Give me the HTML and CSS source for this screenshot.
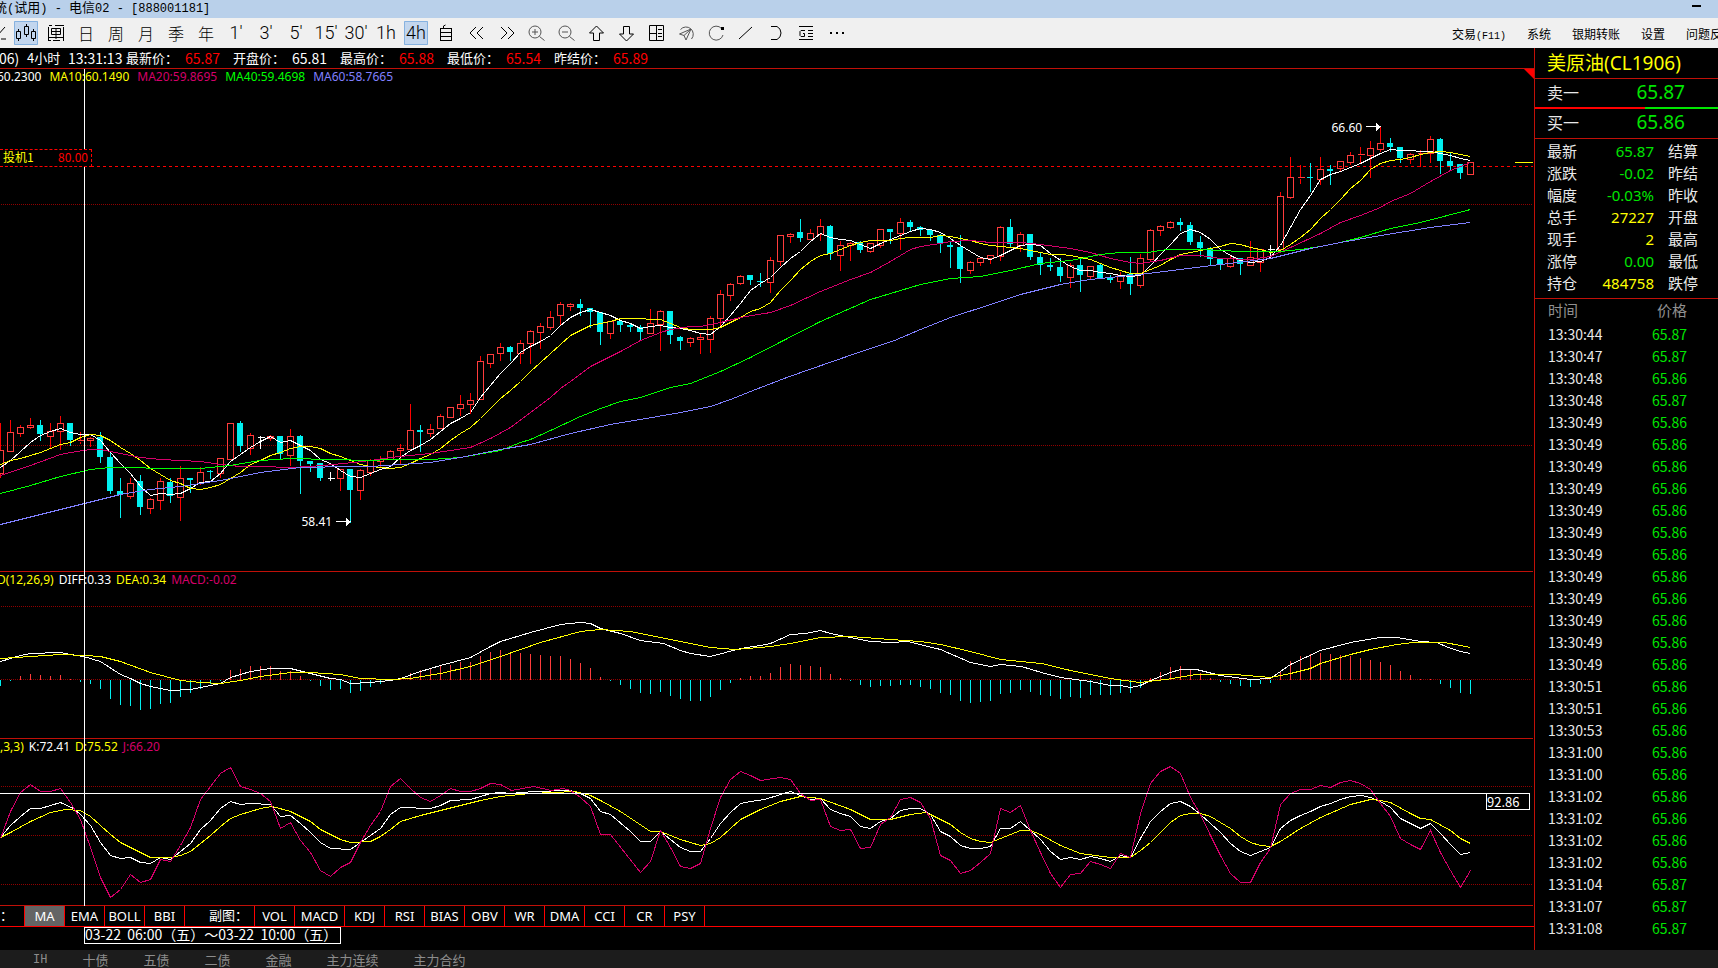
FILE: index.html
```html
<!DOCTYPE html>
<html lang="zh-CN">
<head>
<meta charset="utf-8">
<title>美原油(CL1906)</title>
<link rel="stylesheet" href="styles.css">
</head>
<body>
<div class="app">
  <header class="titlebar">
    <h1 class="window-title">统<span class="mono">(</span>试用<span class="mono">) - </span>电信<span class="mono">02 - [888001181]</span></h1>
    <button class="minimize" aria-label="最小化"></button>
  </header>

  <nav class="toolbar">
    <div class="tools">
      <button class="tool" aria-label="分时"><svg viewBox="0 0 24 24"><path d="M3 17l6-6 4 4 8-9M17 18h5"/></svg></button>
      <button class="tool active" aria-label="K线"><svg viewBox="0 0 24 24"><path d="M4.500 8v3M4.500 17v3M2.500 10.500h4v7h-4zM12.500 3v3M12.500 13v3M10.500 5.500h4v8h-4zM19.500 8v3M19.500 17v3M17.500 10.500h4v7h-4z"/></svg></button>
      <button class="tool" aria-label="盘口"><svg viewBox="0 0 24 24"><path d="M4.500 6v14M19.500 6v14M5 4.500h3M11 4.500h9M7.500 7.500h9v6h-9zM7.500 10.500h9M12 7v11M5 16.500h14M5 19.500h2M9 19.500h7"/></svg></button>
      <button class="tool">日</button>
      <button class="tool">周</button>
      <button class="tool">月</button>
      <button class="tool">季</button>
      <button class="tool">年</button>
      <button class="tool num">1′</button>
      <button class="tool num">3′</button>
      <button class="tool num">5′</button>
      <button class="tool num">15′</button>
      <button class="tool num">30′</button>
      <button class="tool num">1h</button>
      <button class="tool num active">4h</button>
      <button class="tool" aria-label="自定义"><svg viewBox="0 0 24 24"><path d="M6.500 7v13M17.500 7v13M6 7.500h12M6 11.500h12M6 15.500h12M6 19.500h12M9.500 7V5l2-1"/></svg></button>
      <button class="tool" aria-label="后退"><svg viewBox="0 0 24 24"><path d="M12 6l-6 6 6 6M19 6l-6 6 6 6"/></svg></button>
      <button class="tool" aria-label="前进"><svg viewBox="0 0 24 24"><path d="M7 6l6 6-6 6M14 6l6 6-6 6"/></svg></button>
      <button class="tool soft" aria-label="放大"><svg viewBox="0 0 24 24"><circle cx="11" cy="11" r="6"/><path d="M15.500 15.500l5 4M8 11h6M11 8v6"/></svg></button>
      <button class="tool soft" aria-label="缩小"><svg viewBox="0 0 24 24"><circle cx="11" cy="11" r="6"/><path d="M15.500 15.500l5 4M8 11h6"/></svg></button>
      <button class="tool" aria-label="上移"><svg viewBox="0 0 24 24"><path d="M12.500 5l-7 7h4v7.500h6V12h4z"/></svg></button>
      <button class="tool" aria-label="下移"><svg viewBox="0 0 24 24"><path d="M12.500 20l-7-7h4V5.500h6V13h4z"/></svg></button>
      <button class="tool" aria-label="布局"><svg viewBox="0 0 24 24"><path d="M5.500 4.500h14v15h-14zM12.500 5v14M6 12.500h6M14 8.500h4M14 12.500h4M14 15.500h4"/></svg></button>
      <button class="tool soft" aria-label="定位"><svg viewBox="0 0 24 24"><path d="M6.500 8.500a7 7 0 1 1 11 9.500M17 8l-11.500 5 4.500 1.500 2 4.500zM17 8l-7 6.500"/></svg></button>
      <button class="tool soft" aria-label="刷新"><svg viewBox="0 0 24 24"><path d="M17.500 7.500a7 7 0 1 0 1.500 6.500"/><path class="solid" d="M17 6h3v3h-3z"/></svg></button>
      <button class="tool" aria-label="画线"><svg viewBox="0 0 24 24"><path d="M5 18L18 6"/></svg></button>
      <button class="tool" aria-label="画弧"><svg viewBox="0 0 24 24"><path d="M7 5.500h6q4 2 4 6.500t-4 6.500H7"/></svg></button>
      <button class="tool" aria-label="公式"><svg viewBox="0 0 24 24"><path d="M5 5.500h14M5 18.500h14M14 9.500h5M14 12.500h5M14 15.500h5M11 9.500H7l-1 1v4l1 1h3.500v-3H9"/></svg></button>
      <button class="tool" aria-label="更多"><svg viewBox="0 0 24 24"><path class="solid" d="M6 11h2v2H6zM12 11h2v2h-2zM18 11h2v2h-2z"/></svg></button>
    </div>
    <div class="menu">
      <button>交易<span class="mono">(F11)</span></button>
      <button>系统</button>
      <button>银期转账</button>
      <button>设置</button>
      <button>问题反馈</button>
    </div>
  </nav>

  <div class="workspace">
    <main class="chart-area">
      <div class="quote-line">
        <span class="code">06)</span>
        <span class="period">4小时</span>
        <span class="clock">13:31:13</span>
        <dl class="quotes">
          <div><dt>最新价：</dt><dd class="up">65.87</dd></div>
          <div><dt>开盘价：</dt><dd>65.81</dd></div>
          <div><dt>最高价：</dt><dd class="up">65.88</dd></div>
          <div><dt>最低价：</dt><dd class="up">65.54</dd></div>
          <div><dt>昨结价：</dt><dd class="up">65.89</dd></div>
        </dl>
      </div>

      <div class="charts">
        <section class="panel price">
          <svg id="price" class="plot"></svg>
          <div class="legend wide"><span>60.2300</span><span class="yellow">MA10:60.1490</span><span class="magenta">MA20:59.8695</span><span class="lime">MA40:59.4698</span><span class="violet">MA60:58.7665</span></div>
          <div class="corner"></div>
        </section>
        <section class="panel">
          <svg id="macd" class="plot"></svg>
          <div class="legend"><span class="yellow">D(12,26,9)</span><span>DIFF:0.33</span><span class="yellow">DEA:0.34</span><span class="magenta">MACD:-0.02</span></div>
        </section>
        <section class="panel">
          <svg id="kdj" class="plot"></svg>
          <div class="legend flush"><span class="yellow">,3,3)</span><span>K:72.41</span><span class="yellow">D:75.52</span><span class="magenta">J:66.20</span></div>
        </section>
        <div class="cross-v"></div>
        <div class="cross-h"></div>
        <output class="cross-value">92.86</output>
        <div class="order"><span>投机1</span><span class="up">80.00</span></div>
      </div>

      <div class="tabs">
        <span class="tab-label first">：</span>
        <button class="selected">MA</button>
        <button>EMA</button>
        <button>BOLL</button>
        <button>BBI</button>
        <span class="tab-label">副图：</span>
        <button>VOL</button>
        <button class="wide">MACD</button>
        <button>KDJ</button>
        <button>RSI</button>
        <button>BIAS</button>
        <button>OBV</button>
        <button>WR</button>
        <button>DMA</button>
        <button>CCI</button>
        <button>CR</button>
        <button>PSY</button>
      </div>
      <div class="time-axis"><time>03-22  06:00（五）～03-22  10:00（五）</time></div>
    </main>

    <aside class="side">
      <h2 class="contract">美原油(CL1906)</h2>
      <div class="depth"><span>卖一</span><strong>65.87</strong></div>
      <div class="ratio"></div>
      <div class="depth"><span>买一</span><strong>65.86</strong></div>
      <table class="stats">
        <tr><th>最新</th><td>65.87</td><th>结算</th></tr>
        <tr><th>涨跌</th><td>-0.02</td><th>昨结</th></tr>
        <tr><th>幅度</th><td>-0.03%</td><th>昨收</th></tr>
        <tr><th>总手</th><td class="yellow">27227</td><th>开盘</th></tr>
        <tr><th>现手</th><td class="yellow">2</td><th>最高</th></tr>
        <tr><th>涨停</th><td>0.00</td><th>最低</th></tr>
        <tr><th>持仓</th><td class="yellow">484758</td><th>跌停</th></tr>
      </table>
      <table class="ticks">
        <thead><tr><th>时间</th><th>价格</th></tr></thead>
        <tbody>
          <tr><td>13:30:44</td><td>65.87</td></tr>
          <tr><td>13:30:47</td><td>65.87</td></tr>
          <tr><td>13:30:48</td><td>65.86</td></tr>
          <tr><td>13:30:48</td><td>65.87</td></tr>
          <tr><td>13:30:49</td><td>65.86</td></tr>
          <tr><td>13:30:49</td><td>65.86</td></tr>
          <tr><td>13:30:49</td><td>65.86</td></tr>
          <tr><td>13:30:49</td><td>65.86</td></tr>
          <tr><td>13:30:49</td><td>65.86</td></tr>
          <tr><td>13:30:49</td><td>65.86</td></tr>
          <tr><td>13:30:49</td><td>65.86</td></tr>
          <tr><td>13:30:49</td><td>65.86</td></tr>
          <tr><td>13:30:49</td><td>65.86</td></tr>
          <tr><td>13:30:49</td><td>65.86</td></tr>
          <tr><td>13:30:49</td><td>65.86</td></tr>
          <tr><td>13:30:49</td><td>65.86</td></tr>
          <tr><td>13:30:51</td><td>65.86</td></tr>
          <tr><td>13:30:51</td><td>65.86</td></tr>
          <tr><td>13:30:53</td><td>65.86</td></tr>
          <tr><td>13:31:00</td><td>65.86</td></tr>
          <tr><td>13:31:00</td><td>65.86</td></tr>
          <tr><td>13:31:02</td><td>65.86</td></tr>
          <tr><td>13:31:02</td><td>65.86</td></tr>
          <tr><td>13:31:02</td><td>65.86</td></tr>
          <tr><td>13:31:02</td><td>65.86</td></tr>
          <tr><td>13:31:04</td><td>65.87</td></tr>
          <tr><td>13:31:07</td><td>65.87</td></tr>
          <tr><td>13:31:08</td><td>65.87</td></tr>
        </tbody>
      </table>
    </aside>
  </div>

  <footer class="markets">
    <button class="mono">IH</button>
    <button>十债</button>
    <button>五债</button>
    <button>二债</button>
    <button>金融</button>
    <button>主力连续</button>
    <button>主力合约</button>
  </footer>
</div>
<script src="chart.js"></script>
</body>
</html>
```

FILE: styles.css
```css
:root {
  --red: #ff0000;
  --line: #c01008;
  --yellow: #ffff00;
  --magenta: #d4006a;
  --lime: #00ff00;
  --green: #00e600;
  --violet: #8080ff;
  --cyan: #00f0f0;
  --cjk: "Noto Sans CJK SC", sans-serif;
  --latin: "Noto Sans", "Noto Sans CJK SC", sans-serif;
}

* { box-sizing: border-box; }

body {
  margin: 0;
  background: #000;
  color: #fff;
  font-family: var(--cjk);
  font-size: 13px;
  overflow: hidden;
}

button {
  padding: 0;
  border: 0;
  background: none;
  color: inherit;
  font: inherit;
}

.app {
  display: flex;
  flex-direction: column;
  min-height: 100vh;
}

.mono { font-family: "Liberation Mono", monospace; font-size: 12px; }
.up { color: var(--red); }
.yellow { color: var(--yellow); }
.magenta { color: var(--magenta); }
.lime { color: var(--lime); }
.violet { color: var(--violet); }

/* Window title */
.titlebar {
  display: flex;
  justify-content: space-between;
  height: 18px;
  background: #b9d0ea;
  color: #000;
}
.window-title {
  margin: 0 0 0 -6px;
  font-size: 13px;
  font-weight: 400;
  line-height: 14px;
  white-space: pre;
}
.minimize {
  width: 9px;
  height: 2px;
  margin: 5px 17px 0 0;
  background: #000;
}

/* Toolbar */
.toolbar {
  display: flex;
  justify-content: space-between;
  align-items: center;
  height: 30px;
  background: #f0f0f0;
  color: #000;
}
.tools {
  display: flex;
  gap: 6px;
  margin-left: -16px;
}
.tool {
  display: flex;
  align-items: center;
  justify-content: center;
  width: 24px;
  height: 24px;
  font-size: 16px;
  font-weight: 300;
  line-height: 22px;
  white-space: nowrap;
}
.tool.num { font-family: Roboto, sans-serif; font-size: 18px; }
.tool.active {
  background: #c2d6ee;
  box-shadow: inset 0 0 0 1px #86b2e0;
  border-radius: 1px;
}
.tool svg {
  flex: none;
  width: 24px;
  height: 24px;
  fill: none;
  stroke: #000;
}
.tool.soft svg { stroke: #555; }
.tool .solid { fill: #000; stroke: none; }
.menu {
  display: flex;
  gap: 21px;
  margin-right: -16px;
  font-size: 12px;
}
.menu .mono { font-size: 10px; }

/* Workspace */
.workspace { display: flex; flex: 1; }
.chart-area {
  display: flex;
  flex: 1;
  flex-direction: column;
  min-width: 0;
}
.quote-line {
  display: flex;
  align-items: center;
  height: 21px;
  border-bottom: 1px solid var(--line);
  font-size: 14px;
  line-height: 20px;
  overflow: hidden;
}
.code { width: 28px; margin-left: -1px; }
.period { width: 41px; font-size: 13px; }
.clock { width: 58px; }
.quotes { display: flex; margin: 0; }
.quotes div { display: flex; width: 107px; }
.quotes dt { width: 59px; font-size: 13px; }
.quotes dd { margin: 0; }

.charts {
  position: relative;
  flex: 1;
  overflow: hidden;
}
.panel {
  position: relative;
  height: 167px;
  margin-right: 1px;
  border-bottom: 1px solid var(--line);
}
.panel.price { height: 503px; }
.plot {
  display: block;
  width: 100%;
  height: 100%;
  overflow: hidden;
  shape-rendering: crispEdges;
}
.plot text { fill: #fff; font-family: var(--latin); font-size: 12px; }
.plot line, .plot polyline, .plot path { fill: none; stroke-width: 1; }
.grid { stroke: #900000; stroke-dasharray: 1 1; }
.dash { stroke: var(--red); stroke-dasharray: 3 3; }
.wick-r { stroke: #ff0000; }
.body-r { stroke: #ff3c3c; }
.wick-c { stroke: var(--cyan); }
.body-c { fill: var(--cyan); }
.doji { stroke: #fff; }
.s-white { stroke: #fff; }
.s-yellow { stroke: var(--yellow); }
.s-magenta { stroke: var(--magenta); }
.s-lime { stroke: var(--lime); }
.s-violet { stroke: var(--violet); }
.arrow { fill: #fff; }

.legend {
  position: absolute;
  top: 0;
  left: -3px;
  display: flex;
  gap: 5px;
  font-family: var(--latin);
  font-size: 12px;
  line-height: 16px;
  white-space: nowrap;
}
.legend.wide { gap: 8px; }
.legend.flush { left: 0; }
.corner {
  position: absolute;
  top: 0;
  right: -1px;
  border-top: 10px solid var(--red);
  border-left: 10px solid transparent;
}
.cross-v {
  position: absolute;
  top: 0;
  bottom: 0;
  left: 84px;
  width: 1px;
  background: #fff;
}
.cross-h {
  position: absolute;
  top: 724px;
  right: 4px;
  left: 0;
  height: 1px;
  background: #fff;
}
.cross-value {
  position: absolute;
  top: 724px;
  right: 4px;
  width: 44px;
  height: 17px;
  border: 1px solid #fff;
  background: #000;
  font-size: 13px;
  line-height: 15px;
}
.order {
  position: absolute;
  top: 80px;
  left: 0;
  display: flex;
  justify-content: space-between;
  width: 92px;
  height: 18px;
  padding: 0 3px;
  border: 1px dashed var(--red);
  border-left: 0;
  background: #000;
  color: var(--yellow);
  font-size: 12px;
  line-height: 14px;
}

/* Indicator tabs */
.tabs {
  display: flex;
  height: 21px;
  border-bottom: 1px solid var(--red);
  font-family: var(--latin);
  font-size: 13px;
  line-height: 18px;
  overflow: hidden;
}
.tabs button, .tab-label {
  flex: none;
  width: 40px;
  border-right: 1px solid var(--red);
  text-align: center;
}
.tabs .wide { width: 50px; }
.tabs .selected { background: #646464; }
.tab-label { width: 70px; padding-left: 18px; }
.tab-label.first { width: 25px; padding: 0; text-align: left; }
.time-axis { height: 23px; padding-left: 84px; }
.time-axis time {
  display: inline-block;
  width: 257px;
  height: 17px;
  border: 1px solid #fff;
  font-size: 14px;
  line-height: 13px;
  white-space: pre;
  vertical-align: top;
}

/* Quote sidebar */
.side {
  width: 184px;
  border-left: 1px solid var(--line);
  color: #e8e8e8;
  overflow: hidden;
}
.contract {
  height: 31px;
  margin: 0;
  padding-left: 12px;
  border-bottom: 1px solid var(--line);
  color: var(--yellow);
  font-family: var(--latin);
  font-size: 19px;
  font-weight: 400;
  line-height: 30px;
}
.depth {
  display: flex;
  justify-content: space-between;
  height: 28px;
  padding: 0 33px 0 12px;
  font-size: 16px;
  line-height: 26px;
}
.depth strong {
  color: var(--green);
  font-family: var(--latin);
  font-size: 19px;
  font-weight: 400;
}
.ratio {
  height: 2px;
  background: linear-gradient(90deg, var(--red) 60%, var(--green) 60%);
}
.side table { width: 100%; border-collapse: collapse; table-layout: fixed; }
.side th { padding: 0; font-weight: 400; text-align: left; }
.side td { padding: 0; }
.stats {
  margin-top: 1px;
  border-top: 1px solid var(--line);
  font-size: 15px;
  line-height: 22px;
}
.side .stats { display: block; padding: 1px 0 4px 12px; border-bottom: 1px solid var(--line); }
.stats tr { display: flex; height: 22px; }
.stats th { width: 50px; }
.stats th:first-child { width: 35px; }
.stats td {
  width: 72px;
  margin-right: 14px;
  color: var(--green);
  font-family: var(--latin);
  text-align: right;
}
.stats td.yellow { color: var(--yellow); }
.ticks { font-size: 14px; line-height: 22px; }
.ticks th { height: 24px; color: #909090; font-size: 15px; vertical-align: top; }
.ticks tr > :first-child { padding-left: 13px; }
.ticks tr > :last-child { padding-right: 31px; text-align: right; }
.ticks td { height: 22px; }
.ticks td:last-child { color: var(--green); }

/* Market tabs */
.markets {
  display: flex;
  gap: 35px;
  height: 18px;
  padding-left: 33px;
  background: #1c1c1c;
  color: #8c8c8c;
  font-size: 13px;
  line-height: 20px;
  overflow: hidden;
}
```

FILE: chart.js
```javascript
// Bars are 10px apart. Each candle: kind, body top, body bottom, high, low.
const candles = `
r 450 473 422 477|r 432 451 419 451|r 427 433 424 436|r 425 427 417 428|c 425 434 419 440|r 431 436 422 448|r 423 431 415 449|c 423 440 422 445|r 440 441 431 443|r 438 440 436 446|
c 437 457 431 462|c 457 491 452 493|c 491 495 477 517|r 483 496 477 498|c 481 507 474 514|r 499 508 497 513|r 481 500 477 509|c 482 496 477 502|r 478 497 465 520|c 478 480 477 492|
r 472 483 466 484|c 471 472 469 478|r 458 473 457 477|r 423 459 423 459|c 423 446 420 451|r 435 448 432 454|w 437 437 435 448|r 436 438 434 440|c 436 454 436 458|r 436 455 428 465|
c 436 461 434 493|c 461 464 460 471|c 463 478 462 480|w 478 478 471 480|r 469 478 468 490|c 469 490 469 522|r 470 490 468 499|r 460 472 458 475|r 459 461 455 466|r 451 459 449 459|
r 448 450 443 464|r 430 449 403 449|c 430 432 424 451|r 429 433 423 436|r 416 428 413 428|r 407 417 406 417|r 404 408 394 415|r 400 404 392 413|r 361 399 355 399|r 354 363 353 367|
r 347 353 342 360|c 347 352 345 360|r 343 353 339 363|r 331 343 329 363|r 326 332 322 348|r 317 327 310 329|r 304 315 301 324|r 304 306 302 310|c 304 308 298 315|c 308 312 307 327|
c 312 332 311 344|r 321 333 320 338|c 321 325 321 331|c 325 327 323 331|c 327 332 324 340|r 323 333 308 333|r 311 324 309 350|c 311 335 311 343|c 337 341 335 349|r 338 342 336 346|
r 337 339 333 353|r 318 339 315 352|r 294 318 289 325|r 284 295 282 300|r 276 283 274 284|c 275 280 274 284|c 281 282 272 286|r 260 282 256 292|r 235 261 234 265|r 234 236 232 242|
c 232 238 218 241|r 233 239 228 239|r 226 234 218 240|c 226 254 224 259|r 245 255 240 270|r 243 245 241 260|c 242 250 240 252|r 243 251 243 252|r 229 245 228 247|c 229 232 228 243|
r 222 233 217 249|c 222 227 219 231|c 227 230 225 235|c 230 235 229 240|c 235 244 233 252|c 245 247 241 267|c 247 269 234 282|r 262 270 260 273|r 258 262 257 265|r 255 258 255 263|
r 227 256 225 260|c 227 244 218 247|r 234 245 231 251|c 234 257 233 259|c 257 265 252 274|c 265 267 257 270|c 267 276 257 281|r 265 277 262 287|c 265 275 258 291|r 266 276 265 279|
c 265 278 263 278|c 278 280 274 282|r 275 281 271 288|c 274 284 256 294|r 258 285 253 287|r 230 259 228 261|r 226 230 224 235|r 222 227 220 228|c 222 225 217 230|c 225 242 221 244|
c 242 248 235 256|c 248 259 246 264|c 258 264 257 269|r 258 266 255 267|c 258 264 258 274|r 257 265 240 265|r 249 262 249 271|w 249 249 244 255|r 196 249 191 249|r 177 197 156 198|
r 177 178 164 183|c 177 178 162 191|r 169 179 156 184|c 169 171 164 184|r 161 168 160 170|r 155 162 151 164|r 154 155 146 162|r 148 155 140 177|r 143 149 126 151|c 143 147 137 151|
c 147 158 147 162|r 154 159 152 163|r 153 154 149 166|r 139 153 135 162|c 139 161 137 173|c 161 166 152 170|c 164 173 164 178|r 162 174 162 174`
  .replace(/\n/g, '').split('|').map(s => s.split(' '));

// One value per bar.
const ma5 = [467,460,451,442,435,431,428,432,434,434,440,452,463,473,486,495,493,494,493,488,482,481,473,461,454,447,441,436,442,440,445,450,459,463,470,476,477,473,469,466,457,450,445,439,431,423,418,412,397,385,373,363,352,346,341,335,325,317,312,309,312,315,320,323,328,326,325,327,328,330,333,334,326,315,303,290,283,277,267,258,251,241,233,237,239,240,244,248,243,239,235,231,228,229,232,238,245,251,257,259,255,250,245,244,245,253,260,266,270,270,272,273,275,276,275,265,254,244,233,229,232,239,249,255,260,262,261,257,245,227,209,195,179,174,171,167,163,158,153,149,150,150,151,151,153,155,158,160];
const ma10 = [464,460,458,455,452,448,444,442,437,434,435,440,447,453,460,468,474,480,483,488,489,487,484,478,472,464,460,455,452,448,446,446,448,453,456,460,464,466,467,468,467,463,458,454,448,440,433,427,418,408,398,390,381,371,362,353,344,335,330,325,323,321,318,318,318,319,319,323,327,329,329,329,327,322,317,311,308,302,290,280,269,261,255,253,249,245,242,240,240,240,238,237,237,237,235,236,238,240,243,245,246,247,248,250,252,254,254,255,257,259,263,267,270,273,273,269,265,259,254,252,250,248,246,243,244,247,249,252,250,244,237,229,218,209,199,188,180,169,163,160,159,157,154,152,151,152,154,156];
const ma20 = '0,475 30,465 60,454 70,452 90,449 100,449 120,453 140,457 160,459 180,460 200,461 220,464 240,466 260,466 290,467 310,466 333,464 353,462 370,460 390,457 410,455 430,453 450,450 470,447 490,438 510,427 530,412 550,397 560,388 570,381 590,366 600,361 620,351 640,340 660,332 670,329 690,326 700,326 720,322 740,317 770,312 790,305 820,291 830,287 850,279 870,272 890,261 910,249 920,246 940,243 950,241 970,240 990,242 1020,242 1040,244 1070,248 1090,252 1110,258 1130,262 1140,263 1160,260 1180,255 1200,255 1220,258 1250,259 1270,256 1290,247 1320,233 1340,222 1360,215 1380,207 1390,201 1410,193 1430,181 1450,170 1470,162';
const ma40 = '0,493 30,485 60,476 90,469 110,467 140,467 150,468 200,468 230,465 260,460 290,458 330,459 370,460 390,459 430,459 460,457 500,450 520,442 530,439 550,430 580,416 600,408 620,401 640,397 670,387 690,383 720,371 750,357 783,340 820,321 870,299 920,284 950,278 980,276 1010,270 1040,263 1070,260 1100,254 1120,252 1147,252 1167,249 1200,249 1240,251 1280,251 1300,249 1320,246 1340,242 1360,237 1390,228 1420,222 1470,209';
const ma60 = '0,524 40,514 80,504 120,494 150,489 180,486 220,480 260,472 300,467 350,466 370,466 400,464 430,462 460,457 500,449 530,444 570,433 610,424 640,419 680,412 710,406 730,399 750,391 789,376 855,353 894,340 920,329 950,317 990,304 1020,294 1060,284 1090,279 1120,276 1140,274 1180,269 1220,264 1270,258 1310,248 1340,242 1380,235 1430,227 1470,222';
const hist = [-6,-1,4,6,5,4,5,1,-2,-4,-9,-19,-25,-26,-30,-29,-24,-23,-17,-13,-9,-4,-1,10,11,14,14,14,9,9,4,-1,-6,-10,-9,-13,-11,-7,-4,-1,2,7,10,11,14,15,18,18,24,28,30,28,27,26,25,24,24,21,17,12,3,-1,-5,-9,-13,-14,-12,-16,-19,-21,-21,-17,-10,-3,2,4,4,7,13,16,15,14,13,6,2,-1,-5,-7,-6,-6,-5,-5,-7,-9,-13,-15,-21,-23,-22,-21,-14,-13,-10,-12,-15,-16,-19,-17,-18,-15,-15,-15,-13,-13,-8,2,8,13,14,11,7,2,-2,-4,-6,-7,-4,-3,8,19,24,26,27,26,25,24,22,20,18,15,9,5,1,1,-4,-8,-13,-14];
const diff = '0,661 10,658 20,655 30,653 60,652 70,654 83,656 100,661 120,674 130,678 140,683 150,686 170,690 190,689 220,683 230,677 240,674 250,671 270,668 290,668 310,673 330,678 340,679 350,683 370,682 390,680 400,678 420,671 440,665 470,657 490,646 500,641 530,632 560,624 580,622 590,623 600,628 620,633 640,640 663,643 680,650 690,653 710,656 740,648 760,645 770,643 790,634 805,633 820,630 830,633 850,637 870,641 890,642 907,641 940,649 970,662 990,666 1000,664 1021,666 1041,672 1060,677 1090,681 1110,685 1120,685 1130,687 1140,685 1150,680 1170,672 1180,669 1196,669 1220,675 1250,679 1270,678 1290,664 1320,650 1350,642 1380,637 1396,637 1420,641 1436,642 1448,647 1460,651 1470,653';
const dea = '0,658 30,656 60,654 84,655 100,656 120,661 150,672 180,680 200,682 220,683 240,680 260,676 290,672 310,672 340,674 360,678 390,679 410,678 440,673 470,666 500,656 540,642 580,631 600,629 630,631 660,637 690,643 710,647 735,649 770,646 790,643 820,637 850,636 890,639 920,641 940,644 970,651 1000,659 1041,663 1070,670 1110,678 1139,682 1165,679 1196,674 1234,674 1270,677 1290,673 1310,668 1320,663 1350,654 1370,649 1396,644 1413,642 1444,642 1460,645 1470,647';
const kLine = '0,837 10,825 20,816 30,808 40,808 60,802 73,808 80,814 90,825 100,842 110,855 120,858 130,857 140,862 150,863 160,857 170,859 180,851 190,843 200,829 210,820 220,808 230,801 240,804 250,803 270,804 280,816 290,815 300,823 310,832 320,842 330,848 350,849 360,842 370,835 380,828 390,814 400,807 430,808 440,805 450,800 470,799 490,793 500,792 510,793 533,791 570,790 580,793 590,798 600,811 610,814 630,831 640,841 650,841 660,831 680,847 690,851 700,851 710,838 720,823 730,812 740,803 750,801 764,799 780,794 790,791 800,795 810,799 820,798 830,809 840,813 850,816 860,826 870,828 880,821 890,818 900,810 910,808 920,808 930,814 940,831 950,836 960,845 970,848 980,848 990,846 1000,828 1010,828 1020,821 1030,830 1040,839 1050,851 1060,859 1070,857 1080,859 1090,856 1100,858 1110,861 1120,855 1130,857 1140,838 1150,821 1160,811 1170,803 1180,801 1190,806 1200,814 1210,823 1220,832 1230,843 1240,851 1250,855 1260,851 1270,847 1280,828 1290,820 1300,815 1310,811 1320,806 1330,803 1340,799 1350,796 1361,795 1370,797 1380,801 1390,807 1400,818 1410,823 1420,828 1430,823 1440,833 1450,844 1460,854 1470,852';
const dLine = '0,837 10,832 30,821 50,812 65,809 80,810 90,816 100,825 110,834 120,842 130,847 150,857 170,857 180,855 190,851 200,843 210,835 220,826 230,818 240,814 260,808 272,806 290,811 310,821 320,829 340,839 350,842 370,841 380,836 390,829 400,821 420,815 440,810 460,805 480,800 500,796 530,793 575,791 590,795 600,800 620,811 650,831 660,831 680,839 690,842 700,845 710,843 720,837 740,819 760,809 780,801 800,796 820,798 850,809 870,819 890,819 910,814 925,812 930,814 950,824 960,832 970,838 980,841 990,842 1000,838 1010,834 1020,830 1030,830 1040,834 1060,845 1080,853 1110,857 1130,857 1140,850 1150,842 1160,832 1170,822 1180,815 1190,813 1200,813 1210,816 1230,828 1240,836 1250,842 1260,845 1270,846 1280,841 1300,828 1320,817 1350,804 1370,799 1380,800 1390,802 1410,813 1420,818 1430,819 1450,830 1460,838 1470,843';
const jLine = '0,838 10,811 20,792 30,784 40,791 50,791 60,788 70,802 80,819 90,847 100,877 110,897 120,889 130,874 140,882 150,879 160,859 170,861 180,845 190,827 200,799 210,786 220,773 230,767 240,786 250,789 260,793 270,801 280,828 290,822 300,840 310,852 320,870 330,876 340,867 350,862 360,842 370,825 380,811 390,786 400,778 410,788 420,797 430,801 440,795 450,788 460,791 470,791 480,788 490,783 500,784 511,790 533,786 551,790 563,788 570,790 580,797 590,806 600,834 610,834 640,872 650,861 660,830 670,847 680,866 690,868 700,863 710,828 720,797 730,779 740,771 750,775 760,780 780,777 790,779 800,793 810,800 820,799 830,826 840,830 850,829 860,848 870,847 880,824 890,817 900,799 910,797 920,802 930,818 940,855 950,860 960,873 970,870 980,862 990,853 1000,808 1010,812 1020,805 1030,830 1040,852 1050,873 1060,887 1070,874 1080,873 1090,861 1100,864 1110,868 1120,853 1130,857 1140,813 1150,783 1160,771 1170,766 1180,773 1190,797 1200,814 1210,835 1220,855 1230,873 1240,882 1250,882 1260,862 1270,848 1280,804 1290,793 1300,789 1310,789 1320,785 1330,787 1340,782 1350,780 1360,783 1370,789 1380,803 1390,816 1400,838 1410,844 1420,849 1430,830 1440,852 1450,870 1460,887 1470,870';

const series = values => values.map((y, i) => `${i * 10},${y}`).join(' ');
const curve = (points, color) => `<polyline class="s-${color}" points="${points}"/>`;
const hline = (y, cls) => `<line class="${cls}" x1="0" x2="100%" y1="${y}" y2="${y}"/>`;
const vline = (x, y1, y2, cls) => `<path class="${cls}" d="M${x} ${y1}V${y2}"/>`;

function candle([kind, top, bottom, high, low], i) {
  const x = i * 10;
  const t = +top, b = +bottom, h = +high, l = +low;
  if (kind === 'w') {
    return vline(x, h, l, 'doji') + `<path class="doji" d="M${x - 3} ${t}h7"/>`;
  }
  if (kind === 'c') {
    return vline(x, h, l, 'wick-c') + `<rect class="body-c" x="${x - 3.5}" y="${t - 0.5}" width="6" height="${Math.max(b - t, 1)}"/>`;
  }
  const wicks = vline(x, h, t, 'wick-r') + vline(x, b, l, 'wick-r');
  if (b - t < 2) return wicks + `<path class="body-r" d="M${x - 3} ${t}h7"/>`;
  return wicks + `<path class="body-r" d="M${x - 3} ${t}h6v${b - t}h-6z"/>`;
}

function draw(id, top, content) {
  document.getElementById(id).innerHTML = `<g transform="translate(0.5 ${0.5 - top})">${content}</g>`;
}

draw('price', 69,
  hline(204, 'grid') + hline(445, 'grid') + hline(166, 'dash') +
  candles.map(candle).join('') +
  curve(series(ma5), 'white') + curve(series(ma10), 'yellow') + curve(ma20, 'magenta') +
  curve(ma40, 'lime') + curve(ma60, 'violet') +
  '<text x="301" y="525">58.41</text><path class="s-white" d="M335 521h12"/><polygon class="arrow" points="345,517 345,526 350,521"/>' +
  '<text x="1331" y="131">66.60</text><path class="s-white" d="M1365 126h12"/><polygon class="arrow" points="1375,122 1375,131 1380,126"/>' +
  '<path class="s-yellow" d="M1514 162h20"/>');

draw('macd', 572,
  hline(606, 'grid') + hline(679, 'grid') +
  hist.map((v, i) => vline(i * 10, 679, 679 - v, v > 0 ? 'body-r' : 'wick-c')).join('') +
  curve(diff, 'white') + curve(dea, 'yellow'));

draw('kdj', 739,
  hline(786, 'grid') + hline(835, 'grid') + hline(884, 'grid') +
  curve(kLine, 'white') + curve(dLine, 'yellow') + curve(jLine, 'magenta'));
```
